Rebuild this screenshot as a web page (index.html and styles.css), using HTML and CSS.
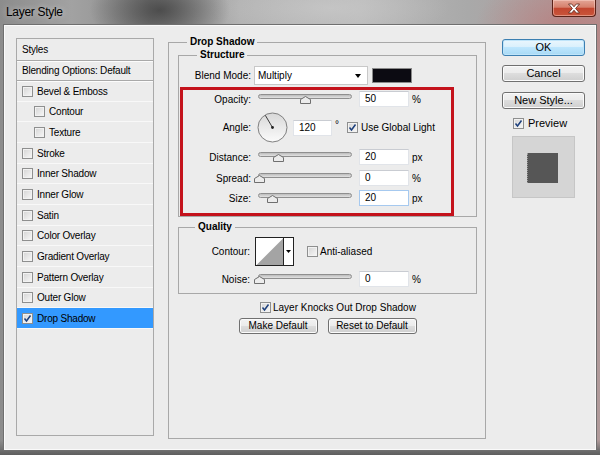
FILE: index.html
```html
<!DOCTYPE html>
<html>
<head>
<meta charset="utf-8">
<title>Layer Style</title>
<link rel="stylesheet" href="styles.css">
</head>
<body>
<div class="window">
  <div class="titlebar">
    <span class="title">Layer Style</span>
    <div class="close">
      <svg width="14" height="11" viewBox="0 0 14 11"><path d="M1.5 1h3.2l2.3 2.8 2.3-2.8h3.2l-3.9 4.5 3.9 4.5h-3.2l-2.3-2.8-2.3 2.8h-3.2l3.9-4.5z" fill="#fff" stroke="#5a2418" stroke-width="0.8"/></svg>
    </div>
  </div>
  <div class="client">
    <div class="styles-list">
      <div class="list-head">Styles</div>
      <div class="list-blend">Blending Options: Default</div>
      <div class="list-item"><span class="cb"></span>Bevel &amp; Emboss</div>
      <div class="list-item sub"><span class="cb"></span>Contour</div>
      <div class="list-item sub"><span class="cb"></span>Texture</div>
      <div class="list-item"><span class="cb"></span>Stroke</div>
      <div class="list-item"><span class="cb"></span>Inner Shadow</div>
      <div class="list-item"><span class="cb"></span>Inner Glow</div>
      <div class="list-item"><span class="cb"></span>Satin</div>
      <div class="list-item"><span class="cb"></span>Color Overlay</div>
      <div class="list-item"><span class="cb"></span>Gradient Overlay</div>
      <div class="list-item"><span class="cb"></span>Pattern Overlay</div>
      <div class="list-item"><span class="cb"></span>Outer Glow</div>
      <div class="list-item selected"><span class="cb"><svg width="9" height="9" viewBox="0 0 9 9"><path d="M1.5 4.5L3.5 7L7.5 1.5" fill="none" stroke="#1c3f7c" stroke-width="1.5"/></svg></span>Drop Shadow</div>
    </div>

    <fieldset class="group main">
      <legend>Drop Shadow</legend>
      <fieldset class="group structure">
        <legend>Structure</legend>
        <div class="row blend-row">
          <span class="lbl w72">Blend Mode:</span>
          <div class="select"><span>Multiply</span><span class="arrow"></span></div>
          <span class="swatch"></span>
        </div>
        <div class="highlight">
          <div class="row r-opacity">
            <span class="lbl w68">Opacity:</span>
            <div class="slider"><div class="track"></div><svg class="thumb" width="11" height="8" style="left:42px"><path d="M0.5 7.5V3.5L5.5 0.5L10.5 3.5V7.5Z" fill="#ececec" stroke="#6f6f6f"/></svg></div>
            <span class="num">50</span><span class="unit">%</span>
          </div>
          <div class="row r-angle">
            <span class="lbl w68">Angle:</span>
            <svg class="dial" width="31" height="31" viewBox="0 0 31 31">
              <defs><linearGradient id="dg" x1="0" y1="0" x2="0" y2="1"><stop offset="0" stop-color="#d8d8d8"/><stop offset="1" stop-color="#fbfbfb"/></linearGradient></defs>
              <circle cx="15.5" cy="15.5" r="14.5" fill="url(#dg)" stroke="#808080"/>
              <line x1="15.5" y1="15.5" x2="8.3" y2="3.3" stroke="#3a3a3a" stroke-width="1"/>
              <circle cx="15.5" cy="15.5" r="1.4" fill="#222"/>
            </svg>
            <span class="num angle">120</span>
            <span class="deg">°</span>
            <span class="cb"><svg width="9" height="9" viewBox="0 0 9 9"><path d="M1.5 4.5L3.5 7L7.5 1.5" fill="none" stroke="#1c3f7c" stroke-width="1.5"/></svg></span>
            <span class="cb-text">Use Global Light</span>
          </div>
          <div class="row r-distance">
            <span class="lbl w68">Distance:</span>
            <div class="slider"><div class="track"></div><svg class="thumb" width="11" height="8" style="left:15px"><path d="M0.5 7.5V3.5L5.5 0.5L10.5 3.5V7.5Z" fill="#ececec" stroke="#6f6f6f"/></svg></div>
            <span class="num">20</span><span class="unit">px</span>
          </div>
          <div class="row r-spread">
            <span class="lbl w68">Spread:</span>
            <div class="slider"><div class="track"></div><svg class="thumb" width="11" height="8" style="left:-4px"><path d="M0.5 7.5V3.5L5.5 0.5L10.5 3.5V7.5Z" fill="#ececec" stroke="#6f6f6f"/></svg></div>
            <span class="num">0</span><span class="unit">%</span>
          </div>
          <div class="row r-size">
            <span class="lbl w68">Size:</span>
            <div class="slider"><div class="track"></div><svg class="thumb" width="11" height="8" style="left:9px"><path d="M0.5 7.5V3.5L5.5 0.5L10.5 3.5V7.5Z" fill="#ececec" stroke="#6f6f6f"/></svg></div>
            <span class="num focus">20</span><span class="unit">px</span>
          </div>
        </div>
      </fieldset>

      <fieldset class="group quality">
        <legend>Quality</legend>
        <div class="row r-contour">
          <span class="lbl w71">Contour:</span>
          <svg class="contour" width="39" height="29" viewBox="0 0 39 29">
            <rect x="0.5" y="0.5" width="38" height="28" fill="#fff" stroke="#222"/>
            <polygon points="1.5,28 28,1.5 28,28" fill="#a4a4a4"/>
            <line x1="28.5" y1="0" x2="28.5" y2="29" stroke="#222"/>
            <polygon points="31,13 36,13 33.5,16" fill="#000"/>
          </svg>
          <span class="cb aa"></span>
          <span class="cb-text">Anti-aliased</span>
        </div>
        <div class="row r-noise">
          <span class="lbl w71">Noise:</span>
          <div class="slider s8"><div class="track"></div><svg class="thumb" width="11" height="8" style="left:-4px"><path d="M0.5 7.5V3.5L5.5 0.5L10.5 3.5V7.5Z" fill="#ececec" stroke="#6f6f6f"/></svg></div>
          <span class="num">0</span><span class="unit">%</span>
        </div>
      </fieldset>

      <div class="row knock-row">
        <span class="cb"><svg width="9" height="9" viewBox="0 0 9 9"><path d="M1.5 4.5L3.5 7L7.5 1.5" fill="none" stroke="#1c3f7c" stroke-width="1.5"/></svg></span>
        <span class="cb-text">Layer Knocks Out Drop Shadow</span>
      </div>
      <div class="btn-row">
        <button class="btn small w79">Make Default</button>
        <button class="btn small w89">Reset to Default</button>
      </div>
    </fieldset>

    <div class="side">
      <button class="btn big default">OK</button>
      <button class="btn big cancel">Cancel</button>
      <button class="btn big newstyle">New Style...</button>
      <div class="row preview-row">
        <span class="cb"><svg width="9" height="9" viewBox="0 0 9 9"><path d="M1.5 4.5L3.5 7L7.5 1.5" fill="none" stroke="#1c3f7c" stroke-width="1.5"/></svg></span>
        <span class="preview-text">Preview</span>
      </div>
      <div class="preview-box"><div class="preview-swatch"></div></div>
    </div>
  </div>
</div>
</body>
</html>
```

FILE: styles.css
```css
* { box-sizing: border-box; }

html, body {
  margin: 0;
  padding: 0;
}

body {
  width: 600px;
  height: 455px;
  overflow: hidden;
  font-family: "Liberation Sans", Arial, sans-serif;
  font-size: 10px;
  color: #000;
}

.window {
  width: 600px;
  height: 455px;
  display: flex;
  flex-direction: column;
  background:
    linear-gradient(to bottom, rgba(100,100,100,0) 440px, #6c6c6c 451px, #5e5e5e 455px),
    radial-gradient(ellipse 70px 40px at 160px 10px, rgba(60,60,60,.8), rgba(60,60,60,0)),
    radial-gradient(ellipse 90px 60px at 565px 30px, rgba(190,110,110,.6), rgba(190,110,110,0)),
    radial-gradient(ellipse 120px 30px at 330px 8px, rgba(205,205,205,.6), rgba(205,205,205,0)),
    linear-gradient(90deg, #8c8c8c 0%, #a2a2a2 12%, #8a8a8a 25%, #b2b2b2 40%, #b9b9b9 60%, #a9a9a9 78%, #b09a9a 100%);
}

/* ---------- title bar ---------- */
.titlebar {
  height: 25px;
  flex: none;
  display: flex;
  align-items: flex-start;
  justify-content: space-between;
}

.title {
  font-size: 12px;
  line-height: 14px;
  padding: 5px 0 0 6px;
  color: #000;
  letter-spacing: -0.3px;
  text-shadow: 0 0 6px rgba(255,255,255,.6);
}

.close {
  width: 44px;
  height: 17px;
  margin-right: 4px;
  border: 1px solid #5a2218;
  border-top: none;
  border-radius: 0 0 4px 4px;
  background: linear-gradient(#e3a596 0%, #d6806c 45%, #c2462f 52%, #c9553b 100%);
  box-shadow: inset 0 0 0 1px rgba(255,220,210,.45);
  display: flex;
  align-items: center;
  justify-content: center;
}

/* ---------- client ---------- */
.client {
  height: 425px;
  margin: 0 4px;
  border: 1px solid #fafafa;
  box-shadow: 0 0 0 1px #6f6f6f;
  background: #ececec;
  display: flex;
  align-items: flex-start;
  padding: 12px 0 0 11px;
}

/* ---------- styles list ---------- */
.styles-list {
  flex: none;
  width: 138px;
  height: 398px;
  border: 1px solid #a9a9a9;
  background: #ececec;
}

.list-head {
  height: 22px;
  line-height: 21px;
  padding-left: 5px;
  border-bottom: 1px solid #a9a9a9;
  box-shadow: 0 1px 0 #fcfcfc;
  letter-spacing: -0.2px;
}

.list-blend {
  height: 20px;
  line-height: 19px;
  padding-left: 5px;
  border-bottom: 1px solid #a9a9a9;
  box-shadow: 0 1px 0 #fcfcfc;
  letter-spacing: -0.2px;
}

.list-item {
  height: 20.667px;
  display: flex;
  align-items: center;
  padding: 1px 0 0 5px;
  border-bottom: 1px solid #f8f8f8;
  letter-spacing: -0.2px;
}

.list-item.sub { padding-left: 17px; }

.list-item .cb { margin-right: 4px; }

.list-item.selected { background: #3399ff; }

/* ---------- checkbox ---------- */
.cb {
  flex: none;
  width: 11px;
  height: 11px;
  border: 1px solid #8e8f8f;
  background: linear-gradient(135deg, #d4d4d4, #f8f8f8);
  box-shadow: inset 0 0 0 1px #f2f2f2;
  display: flex;
  align-items: center;
  justify-content: center;
}

.cb svg { display: block; }

.cb-text { margin-left: 3px; white-space: nowrap; }

/* ---------- group boxes ---------- */
.group {
  margin: 0;
  padding: 0;
  min-width: 0;
  border: 1px solid #a8a8a8;
}

.group > legend {
  font-weight: bold;
  line-height: 12px;
  padding: 0 3px;
}

.main {
  flex: none;
  width: 318px;
  height: 403px;
  margin: -2px 0 0 14px;
  padding: 0 8px 0 9px;
}

.main > legend { margin-left: 9px; }

.structure { margin-top: 1px; }
.structure > legend { margin-left: 18px; }

.quality { margin-top: 4px; padding-bottom: 6px; }
.quality > legend { margin-left: 16px; }

/* ---------- rows ---------- */
.row {
  display: flex;
  align-items: center;
}

.lbl {
  flex: none;
  text-align: right;
  white-space: nowrap;
}

.w72 { width: 72px; }
.w68 { width: 68px; }
.w71 { width: 71px; }

.blend-row { height: 19px; margin-top: 5px; }

.select {
  flex: none;
  width: 114px;
  height: 19px;
  margin-left: 3px;
  background: #fff;
  border: 1px solid #c8c8c8;
  display: flex;
  align-items: center;
  padding-left: 3px;
}

.arrow {
  margin-left: auto;
  margin-right: 6px;
  width: 0;
  height: 0;
  border-left: 3.5px solid transparent;
  border-right: 3.5px solid transparent;
  border-top: 4px solid #000;
}

.swatch {
  flex: none;
  width: 40px;
  height: 15px;
  margin-left: 4px;
  border: 1px solid #8a8a8a;
  background: #0c0b12;
}

.highlight {
  height: 129px;
  width: 274px;
  margin: 2px 0 0 1px;
  border: 3px solid #c4121c;
}

.r-opacity { height: 16px; margin-top: 1px; }
.r-angle { height: 31px; margin-top: 5px; }
.r-distance { height: 16px; margin-top: 6px; }
.r-spread { height: 16px; margin-top: 5px; }
.r-size { height: 16px; margin-top: 4px; }

/* ---------- slider ---------- */
.slider {
  flex: none;
  position: relative;
  width: 94px;
  height: 16px;
  margin-left: 7px;
  padding-top: 3px;
}

.slider.s8 { margin-left: 8px; }

.track {
  height: 5px;
  border: 1px solid #8f8f8f;
  border-radius: 3px;
  background: linear-gradient(#bcbcbc, #e2e2e2);
}

.thumb {
  position: absolute;
  top: 5px;
  display: block;
}

/* ---------- number inputs ---------- */
.num {
  flex: none;
  width: 50px;
  height: 16px;
  margin-left: 7px;
  background: #fff;
  border: 1px solid #e1e4e9;
  border-top-color: #c9ccd2;
  padding-left: 5px;
  line-height: 14px;
}

.num.angle { width: 39px; margin-left: 5px; }
.num.focus { border-color: #a6c9ef; }

.unit { margin-left: 3px; }

.dial { flex: none; display: block; margin-left: 6px; }

.deg {
  flex: none;
  width: 12px;
  margin-left: 3px;
  align-self: flex-start;
  margin-top: 7px;
}

/* ---------- quality ---------- */
.r-contour { height: 29px; margin-top: 4px; }
.contour { flex: none; display: block; margin-left: 5px; }
.cb.aa { margin-left: 13px; }
.r-contour .cb-text { margin-left: 2px; }

.r-noise { height: 16px; margin-top: 5px; }

/* ---------- bottom of main group ---------- */
.knock-row {
  height: 13px;
  margin-top: 7px;
  padding-left: 82px;
}

.knock-row .cb-text { margin-left: 2px; }

.btn-row {
  display: flex;
  justify-content: center;
  gap: 10px;
  margin-top: 4px;
}

/* ---------- buttons ---------- */
.btn {
  flex: none;
  display: block;
  margin: 0;
  padding: 0;
  font-family: "Liberation Sans", Arial, sans-serif;
  color: #000;
  text-align: center;
  border: 1px solid #707070;
  border-radius: 3px;
  background: linear-gradient(#f2f2f2 0%, #ebebeb 50%, #dddddd 50%, #cfcfcf 100%);
  box-shadow: inset 0 0 0 1px #fbfbfb;
}

.btn.small {
  height: 16px;
  font-size: 10px;
  line-height: 14px;
}

.w79 { width: 79px; }
.w89 { width: 89px; }

.side {
  flex: none;
  width: 83px;
  margin: 1px 0 0 16px;
  display: flex;
  flex-direction: column;
}

.btn.big {
  width: 83px;
  height: 17px;
  font-size: 11px;
  line-height: 15px;
}

.btn.default {
  border-color: #3c7fb1;
  background: linear-gradient(#eaf6fd 0%, #d9f0fc 50%, #bee6fd 50%, #a7d9f5 100%);
  box-shadow: inset 0 0 0 1px #bfe4f9;
}

.btn.cancel { margin-top: 9px; }
.btn.newstyle { margin-top: 10px; }

.preview-row {
  height: 12px;
  margin-top: 8px;
  padding-left: 11px;
}

.preview-text {
  margin-left: 4px;
  font-size: 11px;
}

.preview-box {
  width: 63px;
  height: 62px;
  margin: 7px 0 0 10px;
  background: #d5d5d5;
  border: 1px solid #c6c6c6;
  padding: 16px 0 0 14px;
}

.preview-swatch {
  width: 31px;
  height: 30px;
  background: #565656;
  border-left: 1px dotted #9a9a9a;
}
```
